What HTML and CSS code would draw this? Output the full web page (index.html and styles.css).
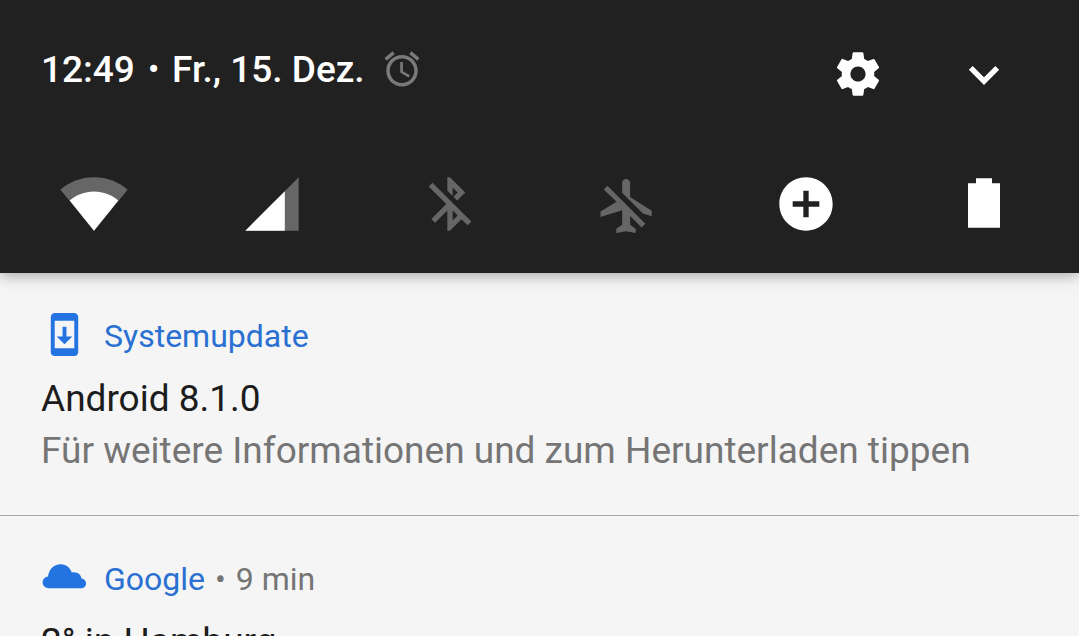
FILE: index.html
```
<!DOCTYPE html>
<html lang="de">

<head>
    <meta charset="UTF-8">
    <meta name="viewport" content="width=device-width, initial-scale=1.0">
    <title>Benachrichtigungen</title>
    <link rel="stylesheet" href="styles.css">
</head>

<body>

    <header class="panel">
        <div class="panel-top">
            <div class="status">
                <span class="time">12:49</span>
                <span class="status-dot">•</span>
                <span class="date">Fr., 15. Dez.</span>
                <svg class="alarm" viewBox="0 0 24 24">
                    <path d="M22 5.720l-4.600-3.860-1.290 1.530 4.600 3.860L22 5.720zM7.880 3.390L6.600 1.860 2 5.710l1.290 1.530 4.590-3.850zM12.500 8H11v6l4.750 2.850.75-1.230-4-2.370V8zM12 4c-4.970 0-9 4.030-9 9s4.020 9 9 9c4.970 0 9-4.030 9-9s-4.030-9-9-9zm0 16c-3.870 0-7-3.130-7-7s3.130-7 7-7 7 3.130 7 7-3.130 7-7 7z"/>
                </svg>
            </div>
            <div class="actions">
                <button class="button" aria-label="Einstellungen">
                    <svg class="action" viewBox="0 0 24 24">
                        <path d="M19.43 12.98c.04-.32.07-.64.07-.98s-.03-.66-.07-.98l2.11-1.65c.19-.15.24-.42.12-.64l-2-3.46c-.12-.22-.39-.3-.61-.22l-2.49 1c-.52-.4-1.08-.73-1.69-.98l-.38-2.65C14.46 2.18 14.25 2 14 2h-4c-.25 0-.46.18-.49.42l-.38 2.65c-.61.25-1.17.59-1.69.98l-2.49-1c-.23-.09-.49 0-.61.22l-2 3.46c-.13.22-.07.49.12.64l2.11 1.65c-.04.32-.07.65-.07.98s.03.66.07.98l-2.11 1.65c-.19.15-.24.42-.12.64l2 3.46c.12.22.39.3.61.22l2.49-1c.52.4 1.08.73 1.69.98l.38 2.65c.03.24.24.42.49.42h4c.25 0 .46-.18.49-.42l.38-2.65c.61-.25 1.17-.59 1.69-.98l2.49 1c.23.09.49 0 .61-.22l2-3.46c.12-.22.07-.49-.12-.64l-2.11-1.65zM12 15.5c-1.93 0-3.5-1.57-3.5-3.5s1.57-3.5 3.5-3.5 3.5 1.57 3.5 3.5-1.57 3.5-3.5 3.5z"/>
                    </svg>
                </button>
                <button class="button" aria-label="Erweitern">
                    <svg class="action" viewBox="1 1 22 22">
                        <path d="M6.400 9.400l5.600 5.600 5.600-5.600" fill="none" stroke="#fff" stroke-width="2.300"/>
                    </svg>
                </button>
            </div>
        </div>

        <div class="tiles">
            <button class="button" aria-label="WLAN">
                <svg class="tile" viewBox="0 0 24 24">
                    <path class="dim" d="M12 22L-.6 6.700C2.600 3.800 7 2 12 2s9.400 1.800 12.600 4.700z"/>
                    <path d="M12 22L2.900 10.700C5.300 8.600 8.400 7.300 12 7.300s6.700 1.300 9.100 3.400z"/>
                </svg>
            </button>
            <button class="button" aria-label="Mobilfunk">
                <svg class="tile" viewBox="0 0 24 24">
                    <path class="dim" d="M2 22h20V2z"/>
                    <path d="M2 22h14.800V7.200z"/>
                </svg>
            </button>
            <button class="button" aria-label="Bluetooth aus">
                <svg class="tile dim" viewBox="0 0 24 24">
                    <path d="M13 5.830l1.880 1.880-1.600 1.600 1.410 1.410 3.020-3.020L12 2h-1v5.030l2 2v-3.200zM5.410 4L4 5.410 10.590 12 5 17.590 6.410 19 11 14.410V22h1l4.290-4.290 2.300 2.290L20 18.590 5.410 4zM13 18.170v-3.760l1.880 1.880L13 18.170z"/>
                </svg>
            </button>
            <button class="button" aria-label="Flugmodus aus">
                <svg class="tile dim" viewBox="0 0 24 24">
                    <path d="M12.800 9.400V4.100c0-.83-.67-1.500-1.500-1.500s-1.500.67-1.500 1.500v3.700l7.800 7.800 3.300 1v-2.100zM2.900 6.600l4.800 4.600-6 3.600v2.100l8.100-2.600v5.500l-2.200 1.500v1.600l3.700-.7 3.600.7v-1.600l-2.100-1.500v-3.300l4.300 4.300 1.400-1.400L4.300 5.200z"/>
                </svg>
            </button>
            <button class="button" aria-label="Datensparmodus">
                <svg class="tile" viewBox="0 0 24 24">
                    <path d="M12 2C6.480 2 2 6.480 2 12s4.480 10 10 10 10-4.480 10-10S17.520 2 12 2zm5 11h-4v4h-2v-4H7v-2h4V7h2v4h4v2z"/>
                </svg>
            </button>
            <button class="button" aria-label="Akku">
                <svg class="tile" viewBox="0 0 24 24">
                    <path d="M6 20.900V4.200h3V2.300h6v1.900h3v16.700z"/>
                </svg>
            </button>
        </div>
    </header>

    <main class="notifications">
        <article class="item">
            <div class="item-head">
                <svg class="item-icon" viewBox="0 0 24 24">
                    <path d="M17 1H7c-1.100 0-2 .9-2 2v18c0 1.100.9 2 2 2h10c1.100 0 2-.9 2-2V3c0-1.100-.9-2-2-2zm0 18H7V5h10v14zm-1-6h-3V8h-2v5H8l4 4 4-4z"/>
                </svg>
                <span class="app">Systemupdate</span>
            </div>
            <h2 class="title">Android 8.1.0</h2>
            <p class="text">Für weitere Informationen und zum Herunterladen tippen</p>
        </article>
        <article class="item">
            <div class="item-head">
                <svg class="item-icon" viewBox="0 0 24 24">
                    <path d="M4 17.500a3 3 0 0 1-.4-6C4 7.900 6.500 5.200 10 5.200c2.700 0 4.800 1.500 5.700 4.200 2.700-.6 4.700 1 5 3.100 1.400.2 2.300 1.200 2.300 2.500 0 1.400-1.100 2.500-2.500 2.500z"/>
                </svg>
                <span class="app">Google</span>
                <span class="dot">•</span>
                <span class="age">9 min</span>
            </div>
            <h2 class="title">2° in Hamburg</h2>
        </article>
    </main>

</body>

</html>
```
FILE: styles.css
```
* {
    margin: 0;
    padding: 0;
    box-sizing: border-box;
}

body {
    height: 100vh;
    overflow: hidden;
    background-color: #f5f5f5;
    font-family: Roboto, sans-serif;
}

svg {
    display: block;
    fill: currentColor;
    overflow: visible;
}

.button {
    border: none;
    background: none;
    color: #fff;
    cursor: pointer;
}

.panel {
    padding: 48px 63px 37px 62px;
    background-color: #212121;
    color: #fff;
    box-shadow: 0 2px 14px rgba(0, 0, 0, 0.35);
}

.panel-top {
    display: flex;
    justify-content: space-between;
    margin: 0 6px 72px -21px;
}

.status {
    display: flex;
    align-items: center;
    height: 42px;
    font-size: 37px;
    font-weight: 500;
}

.status-dot {
    margin: 0 13px;
    font-size: 32px;
}

.alarm {
    width: 42px;
    height: 42px;
    margin-left: 16px;
    color: #7a7a7a;
}

.actions {
    display: flex;
    align-items: center;
    gap: 74px;
}

.action {
    width: 52px;
    height: 52px;
}

.tiles {
    display: flex;
    justify-content: space-between;
}

.tile {
    width: 64px;
    height: 64px;
}

.dim {
    color: #666;
    fill: #666;
}

.item {
    padding: 37px 41px 38px;
    border-bottom: 1px solid #a8a8a8;
}

.item-head {
    display: flex;
    align-items: center;
    height: 48px;
    margin-bottom: 15px;
    font-size: 32px;
    color: #757575;
}

.item-head span {
    padding-top: 4px;
}

.item-icon {
    width: 47px;
    height: 47px;
    margin-right: 16px;
    color: #2374e1;
}

.item-head .app {
    color: #2a70d2;
}

.dot {
    margin: 0 10px;
}

.title,
.text {
    font-size: 37px;
    font-weight: 400;
    line-height: 52px;
}

.title {
    color: #1c1c1c;
}

.text {
    color: #757575;
}
```
